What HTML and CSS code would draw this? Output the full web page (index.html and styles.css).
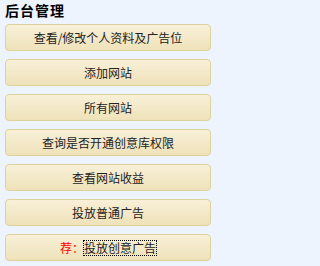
FILE: index.html
```html
<!DOCTYPE html>
<html>
<head>
<meta charset="utf-8">
<link rel="stylesheet" href="styles.css">
</head>
<body>
<div class="panel">
  <h2 class="title">后台管理</h2>
  <ul class="menu">
    <li class="item"><a href="#">查看/修改个人资料及广告位</a></li>
    <li class="item"><a href="#">添加网站</a></li>
    <li class="item"><a href="#">所有网站</a></li>
    <li class="item"><a href="#">查询是否开通创意库权限</a></li>
    <li class="item"><a href="#">查看网站收益</a></li>
    <li class="item"><a href="#">投放普通广告</a></li>
    <li class="item"><span class="hot">荐：</span><a href="#" class="focus">投放创意广告</a></li>
  </ul>
</div>
</body>
</html>
```

FILE: styles.css
```css
html, body {
  margin: 0;
  padding: 0;
  background: #eef4fe;
}
body {
  font-family: "Noto Sans CJK SC", "DejaVu Sans", sans-serif;
  font-size: 12px;
  color: #222;
}
.panel {
  padding: 0 10px 0 5px;
}
.title {
  margin: 0;
  height: 24px;
  line-height: 20px;
  font-size: 14px;
  font-weight: bold;
  letter-spacing: 1px;
  color: #000;
}
.menu {
  list-style: none;
  margin: 0;
  padding: 0;
  display: flex;
  flex-direction: column;
  gap: 8px;
}
.item {
  box-sizing: border-box;
  height: 27px;
  width: 206px;
  border: 1px solid #ddd29c;
  border-radius: 4px;
  background: linear-gradient(#f8f0d8, #efe2ba);
  display: flex;
  align-items: center;
  justify-content: center;
  line-height: 14px;
}
.item a {
  color: #222;
  text-decoration: none;
}
.hot {
  color: #f00;
}
.focus {
  outline: 1px dotted #000;
}
```
